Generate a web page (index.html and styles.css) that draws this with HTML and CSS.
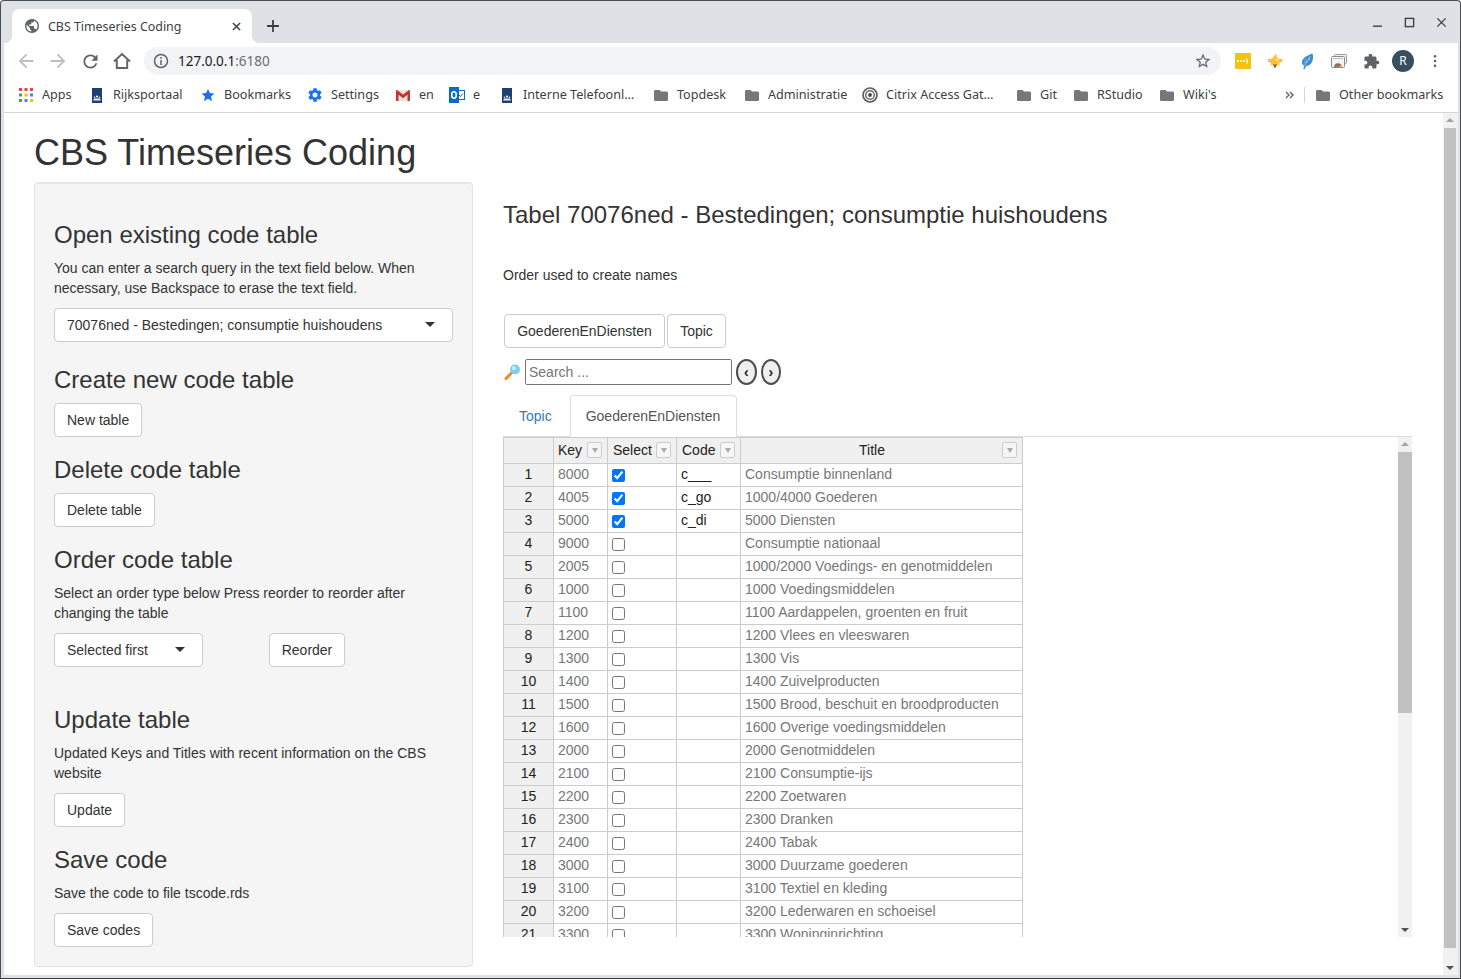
FILE: index.html
```html
<!DOCTYPE html>
<html lang="en">
<head>
<meta charset="utf-8">
<title>CBS Timeseries Coding</title>
<link rel="stylesheet" href="styles.css">
</head>
<body>
<svg class="defs" width="0" height="0" aria-hidden="true">
  <symbol id="folder" viewBox="2 4 20 16" preserveAspectRatio="none"><path d="M10 4H4c-1.100 0-2 .9-2 2v12c0 1.100.9 2 2 2h16c1.100 0 2-.9 2-2V8c0-1.100-.9-2-2-2h-8l-2-2z"/></symbol>
  <symbol id="rijk" viewBox="0 0 10 15"><rect width="10" height="15" fill="#1c3f75"/><circle cx="5" cy="8.500" r="1.100" fill="#fff"/><circle cx="2.500" cy="9.300" r=".9" fill="#cfd8e6"/><circle cx="7.500" cy="9.300" r=".9" fill="#cfd8e6"/><path d="M1.300 12.500c0-1.500 1-2 1-2h5.400s1 .5 1 2z" fill="#e6ebf3"/></symbol>
</svg>
<div class="window">
  <div class="tabstrip">
    <div class="tab">
      <svg class="tab-globe" viewBox="2 2 20 20"><path d="M12 2C6.480 2 2 6.480 2 12s4.480 10 10 10 10-4.480 10-10S17.520 2 12 2zm-1 17.930c-3.950-.49-7-3.850-7-7.930 0-.62.08-1.210.21-1.790L9 15v1c0 1.100.9 2 2 2v1.930zm6.900-2.540c-.26-.81-1-1.390-1.900-1.390h-1v-3c0-.55-.45-1-1-1H8v-2h2c.55 0 1-.45 1-1V7h2c1.100 0 2-.9 2-2v-.41c2.930 1.190 5 4.060 5 7.410 0 2.080-.8 3.970-2.100 5.390z"/></svg>
      <span class="tab-title">CBS Timeseries Coding</span>
      <svg class="tab-close" viewBox="0 0 10 10"><path d="M1 1l8 8M9 1l-8 8"/></svg>
    </div>
    <svg class="new-tab" viewBox="0 0 12 12"><path d="M6 0v12M0 6h12"/></svg>
    <div class="win-controls">
      <span class="win-btn"><svg viewBox="0 0 12 12"><path d="M1 10h10"/></svg></span>
      <span class="win-btn"><svg viewBox="0 0 12 12"><rect x="1.500" y="1.500" width="9" height="9"/></svg></span>
      <span class="win-btn"><svg viewBox="0 0 12 12"><path d="M1.500 1.500l9 9M10.500 1.500l-9 9"/></svg></span>
    </div>
  </div>

  <div class="toolbar">
    <span class="tool"><svg class="arrow-off" viewBox="0 0 24 24"><path d="M20 11H7.830l5.590-5.590L12 4l-8 8 8 8 1.410-1.410L7.830 13H20v-2z"/></svg></span>
    <span class="tool"><svg class="arrow-off" viewBox="0 0 24 24"><path d="M4 11h12.170l-5.590-5.590L12 4l8 8-8 8-1.410-1.410L16.170 13H4v-2z"/></svg></span>
    <span class="tool"><svg class="reload-icon" viewBox="0 0 24 24"><path d="M17.650 6.350C16.200 4.900 14.210 4 12 4c-4.420 0-7.990 3.580-7.990 8s3.570 8 7.990 8c3.730 0 6.840-2.550 7.730-6h-2.080c-.82 2.330-3.040 4-5.650 4-3.310 0-6-2.690-6-6s2.690-6 6-6c1.660 0 3.140.69 4.220 1.780L13 11h7V4l-2.350 2.350z"/></svg></span>
    <span class="tool"><svg class="home-icon" viewBox="0 0 18 18"><path d="M1 9.500L9 2l8 7.500M3.800 8v8h10.400V8"/></svg></span>
    <div class="omnibox">
      <svg class="info-icon" viewBox="0 0 16 16"><circle cx="8" cy="8" r="6.500"/><path d="M8 7v5M8 4v1.800"/></svg>
      <span class="url">127.0.0.1<span class="url-port">:6180</span></span>
      <svg class="star-icon" viewBox="0 0 24 24"><path d="M22 9.240l-7.190-.62L12 2 9.190 8.630 2 9.240l5.460 4.730L5.820 21 12 17.270 18.180 21l-1.630-7.030L22 9.240zM12 15.400l-3.760 2.270 1-4.280-3.320-2.880 4.380-.38L12 6.100l1.710 4.040 4.380.38-3.320 2.880 1 4.280L12 15.400z"/></svg>
    </div>
    <div class="extensions">
      <span class="tool"><svg class="ext" viewBox="0 0 16 16"><rect width="16" height="16" rx="1" fill="#f1c40f"/><circle cx="3" cy="8" r="1.100" fill="#fff"/><circle cx="6" cy="8" r="1.100" fill="#fff"/><circle cx="9" cy="8" r="1.100" fill="#fff"/><path d="M12 5.500v5" stroke="#fff" stroke-width="1.200"/></svg></span>
      <span class="tool"><svg class="ext-star" viewBox="0 0 18 16"><path d="M.5 8l5 1.500L9 15.500l3.500-6 5-1.500-5 .5-3.500 3-3.500-3z" fill="#a9611c"/><path d="M10 .8l1.500 4.400 6 1.300-4.500 3 .6 3L9 11l-4.400 1.500.8-3.500L.5 6.500l5.800-1z" fill="#fbc02d"/><path d="M9.500 2.500l1 3.500 3.500.8-2.800 1.900-1.700-.7z" fill="#ffdc66"/></svg></span>
      <span class="tool"><svg class="ext-feather" viewBox="0 0 13 17"><path d="M11.500 .5c1.200 3.500.5 7.500-1.500 10-1.300 1.700-3.200 2.500-5 2.400L3.500 16.500l-1.200-.5 1-3.300C1 11.500.2 9.300 1.500 7 3 4.200 7.500 1.800 11.500 .5z" fill="#3f8ad4"/><path d="M9.500 3L3.500 12.500M4 6l2 2M8 4.500l.5 3M3 9l3.500 .5" stroke="#a9d2f3" stroke-width=".8" fill="none"/></svg></span>
      <span class="tool"><svg class="ext" viewBox="0 0 16 16"><rect x="3.500" y="1.500" width="12" height="9" rx="1" fill="#f4f4f4" stroke="#9a9a9a"/><rect x=".5" y="3.500" width="13" height="11" rx="1" fill="#f4f4f4" stroke="#8c8c8c"/><path d="M2 5.500h10" stroke="#bbb"/><path d="M3.300 14a3.700 3.700 0 0 1 7.400 0z" fill="#ea4335"/><path d="M3.300 14a3.700 3.700 0 0 1 1.800-3.200l1.900 3.200z" fill="#34a853"/><path d="M7 14l3.700 0a3.700 3.700 0 0 0-.6-2z" fill="#fbbc05"/><circle cx="7" cy="13.300" r="1.300" fill="#4285f4"/></svg></span>
      <span class="tool"><svg class="puzzle-icon" viewBox="0 0 24 24"><path d="M20.500 11H19V7c0-1.100-.9-2-2-2h-4V3.500C13 2.120 11.880 1 10.500 1S8 2.120 8 3.500V5H4c-1.100 0-1.990.9-1.990 2v3.800H3.500c1.490 0 2.700 1.210 2.700 2.700s-1.210 2.700-2.700 2.700H2V20c0 1.100.9 2 2 2h3.800v-1.500c0-1.490 1.210-2.700 2.700-2.700 1.490 0 2.700 1.210 2.700 2.700V22H17c1.100 0 2-.9 2-2v-4h1.500c1.380 0 2.500-1.120 2.500-2.500S21.880 11 20.500 11z"/></svg></span>
      <span class="tool"><span class="avatar">R</span></span>
      <span class="tool"><svg class="dots" viewBox="0 0 4 16"><circle cx="2" cy="2.500" r="1.500"/><circle cx="2" cy="8" r="1.500"/><circle cx="2" cy="13.500" r="1.500"/></svg></span>
    </div>
  </div>

  <div class="bookmarks">
    <span class="bm"><svg class="bm-icon" viewBox="0 0 14 14"><rect width="3" height="3" fill="#ea4335"/><rect x="5.500" width="3" height="3" fill="#ea4335"/><rect x="11" width="3" height="3" fill="#ea4335"/><rect y="5.500" width="3" height="3" fill="#34a853"/><rect x="5.500" y="5.500" width="3" height="3" fill="#fbbc05"/><rect x="11" y="5.500" width="3" height="3" fill="#4285f4"/><rect y="11" width="3" height="3" fill="#34a853"/><rect x="5.500" y="11" width="3" height="3" fill="#4285f4"/><rect x="11" y="11" width="3" height="3" fill="#fbbc05"/></svg>Apps</span>
    <span class="bm"><svg class="bm-rijk"><use href="#rijk"/></svg>Rijksportaal</span>
    <span class="bm"><svg class="bm-icon" viewBox="0 0 24 24"><path fill="#1a73e8" d="M12 1.500l3.300 7.200 7.700.8-5.800 5.200 1.700 7.800L12 18.500l-6.900 4 1.700-7.800L1 9.500l7.700-.8z"/></svg>Bookmarks</span>
    <span class="bm"><svg class="bm-icon" viewBox="2 2 20 20"><path fill="#1a73e8" d="M19.140 12.940c.04-.3.06-.61.06-.94 0-.32-.02-.64-.07-.94l2.030-1.580c.18-.14.23-.41.12-.61l-1.920-3.320c-.12-.22-.37-.29-.59-.22l-2.390.96c-.5-.38-1.030-.7-1.620-.94l-.36-2.540c-.04-.24-.24-.41-.48-.41h-3.840c-.24 0-.43.17-.47.41l-.36 2.540c-.59.24-1.130.57-1.620.94l-2.390-.96c-.22-.08-.47 0-.59.22L2.740 8.870c-.12.21-.08.47.12.61l2.030 1.580c-.05.3-.09.63-.09.94s.02.64.07.94l-2.030 1.580c-.18.14-.23.41-.12.61l1.920 3.320c.12.22.37.29.59.22l2.390-.96c.5.38 1.030.7 1.620.94l.36 2.540c.05.24.24.41.48.41h3.840c.24 0 .44-.17.47-.41l.36-2.540c.59-.24 1.130-.56 1.620-.94l2.390.96c.22.08.47 0 .59-.22l1.920-3.320c.12-.22.07-.47-.12-.61l-2.010-1.580zM12 15.600c-1.980 0-3.600-1.620-3.600-3.600s1.620-3.600 3.600-3.600 3.600 1.620 3.600 3.600-1.620 3.600-3.600 3.600z"/></svg>Settings</span>
    <span class="bm"><svg class="bm-gmail" viewBox="0 0 14 11"><path fill="#e4e4e4" d="M0 0h14v11H0z"/><path fill="#c5372c" d="M0 1C0 .3.7-.2 1.300.2L7 4.500 12.700.2C13.300-.2 14 .3 14 1v10h-2.500V4.800L7 8.200 2.500 4.800V11H0z"/></svg>en</span>
    <span class="bm"><svg class="bm-outlook" viewBox="0 0 16 16"><rect x="8" y="3.500" width="7.500" height="9" fill="#fff" stroke="#0a6cc4"/><path d="M10 8l1.500 1.500 2.500-3" stroke="#0a6cc4" fill="none"/><rect y="0" width="10" height="16" fill="#0a6cc4"/><ellipse cx="5" cy="8" rx="2.300" ry="3.200" fill="none" stroke="#fff" stroke-width="1.600"/></svg>e</span>
    <span class="bm"><svg class="bm-rijk"><use href="#rijk"/></svg>Interne Telefoonl…</span>
    <span class="bm"><svg class="bm-folder"><use href="#folder"/></svg>Topdesk</span>
    <span class="bm"><svg class="bm-folder"><use href="#folder"/></svg>Administratie</span>
    <span class="bm"><svg class="bm-citrix" viewBox="0 0 16 16"><circle cx="8" cy="8" r="7" fill="none" stroke="#5c5c5c" stroke-width="1.700"/><circle cx="8" cy="8" r="4.300" fill="none" stroke="#6a6a6a" stroke-width="1.500"/><circle cx="8" cy="8" r="1.900" fill="#444"/></svg>Citrix Access Gat…</span>
    <span class="bm"><svg class="bm-folder"><use href="#folder"/></svg>Git</span>
    <span class="bm"><svg class="bm-folder"><use href="#folder"/></svg>RStudio</span>
    <span class="bm"><svg class="bm-folder"><use href="#folder"/></svg>Wiki's</span>
    <span class="bm-more"><svg viewBox="0 0 9 8"><path d="M1 1l3 3-3 3M5 1l3 3-3 3"/></svg></span>
    <span class="bm-sep"></span>
    <span class="bm"><svg class="bm-folder"><use href="#folder"/></svg>Other bookmarks</span>
  </div>

  <div class="viewport">
    <div class="page">
      <h1 class="page-title">CBS Timeseries Coding</h1>
      <div class="columns">
        <aside class="well">
          <h3 class="heading">Open existing code table</h3>
          <p class="copy">You can enter a search query in the text field below. When necessary, use Backspace to erase the text field.</p>
          <div class="dropdown dropdown-wide">70076ned - Bestedingen; consumptie huishoudens<span class="caret"></span></div>

          <h3 class="heading heading-after-field">Create new code table</h3>
          <button class="btn" type="button">New table</button>

          <h3 class="heading">Delete code table</h3>
          <button class="btn" type="button">Delete table</button>

          <h3 class="heading">Order code table</h3>
          <p class="copy">Select an order type below Press reorder to reorder after changing the table</p>
          <div class="order-row">
            <div class="dropdown dropdown-order">Selected first<span class="caret"></span></div>
            <button class="btn btn-reorder" type="button">Reorder</button>
          </div>

          <h3 class="heading heading-after-order">Update table</h3>
          <p class="copy">Updated Keys and Titles with recent information on the CBS website</p>
          <button class="btn" type="button">Update</button>

          <h3 class="heading">Save code</h3>
          <p class="copy">Save the code to file tscode.rds</p>
          <button class="btn" type="button">Save codes</button>
        </aside>

        <main class="main">
          <h3 class="heading">Tabel 70076ned - Bestedingen; consumptie huishoudens</h3>
          <p class="order-note">Order used to create names</p>
          <div class="order-buttons">
            <button class="btn btn-goods" type="button">GoederenEnDiensten</button>
            <button class="btn btn-topic" type="button">Topic</button>
          </div>
          <div class="search-row">
            <svg class="search-icon" viewBox="0 0 16 16"><path d="M7 9L1.500 14.500" stroke="#f08a1d" stroke-width="3" stroke-linecap="round"/><circle cx="10.500" cy="5.500" r="5" fill="#7fcdf5"/><circle cx="9.300" cy="4.300" r="2" fill="#c9ecfc"/></svg>
            <input class="search-input" type="text" placeholder="Search ...">
            <button class="round-btn" type="button">‹</button>
            <button class="round-btn" type="button">›</button>
          </div>
          <nav class="tabs">
            <a class="tab-link">Topic</a>
            <a class="tab-link tab-active">GoederenEnDiensten</a>
          </nav>
          <div class="table-area">
            <div class="table-clip">
              <table class="grid">
                <colgroup><col class="c-idx"><col class="c-key"><col class="c-sel"><col class="c-code"><col class="c-title"></colgroup>
                <thead>
                  <tr>
                    <th></th>
                    <th><div class="th-in"><span class="th-label">Key</span><span class="filter"></span></div></th>
                    <th><div class="th-in"><span class="th-label">Select</span><span class="filter"></span></div></th>
                    <th><div class="th-in"><span class="th-label">Code</span><span class="filter"></span></div></th>
                    <th><div class="th-in"><span class="th-label th-center">Title</span><span class="filter"></span></div></th>
                  </tr>
                </thead>
                <tbody>
                  <tr><th>1</th><td class="ro">8000</td><td><input class="chk" type="checkbox" checked></td><td>c___</td><td class="ro">Consumptie binnenland</td></tr>
                  <tr><th>2</th><td class="ro">4005</td><td><input class="chk" type="checkbox" checked></td><td>c_go</td><td class="ro">1000/4000 Goederen</td></tr>
                  <tr><th>3</th><td class="ro">5000</td><td><input class="chk" type="checkbox" checked></td><td>c_di</td><td class="ro">5000 Diensten</td></tr>
                  <tr><th>4</th><td class="ro">9000</td><td><input class="chk" type="checkbox"></td><td></td><td class="ro">Consumptie nationaal</td></tr>
                  <tr><th>5</th><td class="ro">2005</td><td><input class="chk" type="checkbox"></td><td></td><td class="ro">1000/2000 Voedings- en genotmiddelen</td></tr>
                  <tr><th>6</th><td class="ro">1000</td><td><input class="chk" type="checkbox"></td><td></td><td class="ro">1000 Voedingsmiddelen</td></tr>
                  <tr><th>7</th><td class="ro">1100</td><td><input class="chk" type="checkbox"></td><td></td><td class="ro">1100 Aardappelen, groenten en fruit</td></tr>
                  <tr><th>8</th><td class="ro">1200</td><td><input class="chk" type="checkbox"></td><td></td><td class="ro">1200 Vlees en vleeswaren</td></tr>
                  <tr><th>9</th><td class="ro">1300</td><td><input class="chk" type="checkbox"></td><td></td><td class="ro">1300 Vis</td></tr>
                  <tr><th>10</th><td class="ro">1400</td><td><input class="chk" type="checkbox"></td><td></td><td class="ro">1400 Zuivelproducten</td></tr>
                  <tr><th>11</th><td class="ro">1500</td><td><input class="chk" type="checkbox"></td><td></td><td class="ro">1500 Brood, beschuit en broodproducten</td></tr>
                  <tr><th>12</th><td class="ro">1600</td><td><input class="chk" type="checkbox"></td><td></td><td class="ro">1600 Overige voedingsmiddelen</td></tr>
                  <tr><th>13</th><td class="ro">2000</td><td><input class="chk" type="checkbox"></td><td></td><td class="ro">2000 Genotmiddelen</td></tr>
                  <tr><th>14</th><td class="ro">2100</td><td><input class="chk" type="checkbox"></td><td></td><td class="ro">2100 Consumptie-ijs</td></tr>
                  <tr><th>15</th><td class="ro">2200</td><td><input class="chk" type="checkbox"></td><td></td><td class="ro">2200 Zoetwaren</td></tr>
                  <tr><th>16</th><td class="ro">2300</td><td><input class="chk" type="checkbox"></td><td></td><td class="ro">2300 Dranken</td></tr>
                  <tr><th>17</th><td class="ro">2400</td><td><input class="chk" type="checkbox"></td><td></td><td class="ro">2400 Tabak</td></tr>
                  <tr><th>18</th><td class="ro">3000</td><td><input class="chk" type="checkbox"></td><td></td><td class="ro">3000 Duurzame goederen</td></tr>
                  <tr><th>19</th><td class="ro">3100</td><td><input class="chk" type="checkbox"></td><td></td><td class="ro">3100 Textiel en kleding</td></tr>
                  <tr><th>20</th><td class="ro">3200</td><td><input class="chk" type="checkbox"></td><td></td><td class="ro">3200 Lederwaren en schoeisel</td></tr>
                  <tr><th>21</th><td class="ro">3300</td><td><input class="chk" type="checkbox"></td><td></td><td class="ro">3300 Woninginrichting</td></tr>
                </tbody>
              </table>
            </div>
            <div class="scrollbar scrollbar-inner">
              <span class="sb-up"></span>
              <span class="sb-thumb"></span>
              <span class="sb-down"></span>
            </div>
          </div>
        </main>
      </div>
    </div>
    <div class="scrollbar scrollbar-page">
      <span class="sb-up"></span>
      <span class="sb-thumb"></span>
      <span class="sb-down"></span>
    </div>
  </div>
</div>
</body>
</html>
```

FILE: styles.css
```css
* { box-sizing: border-box; }
html, body { margin: 0; height: 100%; overflow: hidden; }
body { font-family: "Liberation Sans", Arial, sans-serif; font-size: 14px; line-height: 20px; color: #333; background: #fff; }
.defs { position: absolute; }

/* Browser frame */
.window { height: 979px; display: flex; flex-direction: column; background: #dee1e6; border: 1px solid #4b4d50; border-bottom-color: #3a3b3d; padding: 0 2px 3px 3px; border-radius: 4px 4px 0 0; font-family: "Noto Sans", sans-serif; }
.tabstrip { height: 42px; flex: none; display: flex; align-items: flex-start; }
.tab { position: relative; margin: 8px 0 0 8px; width: 240px; height: 34px; background: #fff; border-radius: 8px 8px 0 0; display: flex; align-items: center; padding: 0 11px 0 13px; }
.tab::before, .tab::after { content: ""; position: absolute; bottom: 0; width: 8px; height: 8px; }
.tab::before { left: -8px; background: radial-gradient(circle at 0 0, transparent 8px, #fff 8.500px); }
.tab::after { right: -8px; background: radial-gradient(circle at 100% 0, transparent 8px, #fff 8.500px); }
.tab-globe { width: 14px; height: 14px; fill: #5f6368; flex: none; }
.tab-title { margin-left: 9px; padding-top: 2px; font-size: 12.400px; color: #3c4043; flex: 1; white-space: nowrap; }
.tab-close { width: 9px; height: 9px; stroke: #3c4043; stroke-width: 1.600; fill: none; flex: none; }
.new-tab { width: 12px; height: 12px; margin: 19px 0 0 15px; stroke: #3c4043; stroke-width: 1.800; fill: none; flex: none; }
.win-controls { margin-left: auto; display: flex; padding-right: 1px; }
.win-btn { width: 32px; height: 42px; display: flex; align-items: center; justify-content: center; }
.win-btn svg { width: 11px; height: 11px; stroke: #3c4043; stroke-width: 1.500; fill: none; }

.toolbar { height: 37px; flex: none; background: #fff; display: flex; align-items: center; padding: 0 7px 1px 6px; }
.tool { width: 32px; height: 32px; flex: none; display: flex; align-items: center; justify-content: center; }
.arrow-off { width: 22px; height: 22px; fill: #bcbec1; }
.reload-icon { width: 21px; height: 21px; fill: #5f6368; }
.puzzle-icon { width: 17px; height: 17px; fill: #5f6368; }
.home-icon { width: 18px; height: 18px; fill: none; stroke: #5f6368; stroke-width: 1.900; }
.omnibox { flex: 1; height: 28px; margin-left: 6px; border-radius: 14px; background: #f1f3f4; display: flex; align-items: center; padding: 0 9px 0 9px; }
.info-icon { width: 16px; height: 16px; fill: none; stroke: #5f6368; stroke-width: 1.500; flex: none; }
.url { margin-left: 9px; font-size: 13.500px; color: #202124; flex: 1; }
.url-port { color: #6a6e73; }
.star-icon { width: 18px; height: 18px; fill: #5f6368; flex: none; }
.extensions { display: flex; margin-left: 6px; }
.ext { width: 16px; height: 16px; }
.ext-star { width: 18px; height: 16px; }
.ext-feather { width: 13px; height: 17px; }
.avatar { width: 22px; height: 22px; border-radius: 50%; background: #37505f; color: #fff; font-size: 12px; display: flex; align-items: center; justify-content: center; }
.dots { width: 4px; height: 14px; fill: #5f6368; }

.bookmarks { height: 33px; flex: none; background: #fff; border-bottom: 1px solid #d3d5d9; padding: 0 0 2px 15px; display: grid; grid-template-columns: 73px 109px 107px 88px 53px 53px 152px 91px 117px 155px 57px 86px 125px 19px 12px auto; align-items: center; font-size: 12.600px; color: #3c4043; white-space: nowrap; }
.bm { display: flex; align-items: center; }
.bm-icon { width: 14px; height: 14px; margin-right: 9px; flex: none; }
.bm-gmail { width: 14px; height: 11px; margin-right: 9px; flex: none; }
.bm-folder { width: 14px; height: 11px; margin-right: 9px; flex: none; fill: #75787b; }
.bm-rijk { width: 10px; height: 15px; margin-right: 11px; flex: none; }
.bm-outlook { width: 16px; height: 16px; margin-right: 8px; flex: none; }
.bm-citrix { width: 16px; height: 16px; margin-right: 8px; flex: none; }
.bm-more svg { width: 9px; height: 8px; fill: none; stroke: #5f6368; stroke-width: 1.400; display: block; }
.bm-sep { width: 1px; height: 16px; background: #d3d5d9; }

/* Page */
.viewport { flex: 1; min-height: 0; background: #fff; display: flex; overflow: hidden; font-family: "Liberation Sans", Arial, sans-serif; }
.page { flex: 1; min-width: 0; padding: 0 31px 0 30px; }
.page-title { margin: 20px 0 9px; font-size: 36px; line-height: 40px; font-weight: 500; color: #333; }
.columns { display: flex; gap: 30px; align-items: flex-start; }
.well { width: 439px; flex: none; background: #f5f5f5; border: 1px solid #e3e3e3; border-radius: 4px; padding: 19px; box-shadow: inset 0 1px 1px rgba(0,0,0,.05); }
.heading { margin: 20px 0 10px; font-size: 24px; line-height: 26px; font-weight: 500; color: #333; }
.heading-after-field { margin-top: 25px; }
.heading-after-order { margin-top: 40px; }
.copy { margin: 0 0 10px; }
.btn { display: block; height: 34px; padding: 6px 12px; font: inherit; font-size: 14px; line-height: 20px; color: #333; background: #fff; border: 1px solid #ccc; border-radius: 4px; }
.btn-reorder { width: 76px; padding: 6px 0; }
.btn-goods { width: 161px; padding: 6px 0; }
.btn-topic { width: 59px; padding: 6px 0; }
.dropdown { position: relative; height: 34px; padding: 6px 12px; background: #fff; border: 1px solid #ccc; border-radius: 4px; color: #333; }
.dropdown-wide { width: 399px; }
.dropdown-order { width: 149px; }
.caret { position: absolute; top: 13px; right: 17px; border-style: solid; border-width: 5px 5px 0; border-color: #333 transparent transparent; }
.order-row { display: flex; gap: 66px; }

.main { flex: 1; min-width: 0; }
.order-note { margin: 37px 0 0; }
.order-buttons { display: flex; gap: 2px; margin: 29px 0 0 1px; }
.search-row { display: flex; align-items: center; margin-top: 11px; height: 26px; }
.search-icon { width: 17px; height: 16px; margin-left: 1px; flex: none; }
.search-input { width: 207px; height: 26px; margin-left: 4px; padding: 1px 3px; font: inherit; font-size: 14px; border: 1px solid #767676; border-radius: 2px; color: #333; background: #fff; }
.search-input::placeholder { color: #757575; opacity: 1; }
.round-btn { width: 20.500px; height: 26px; margin-left: 4px; padding: 0; border: 2px solid #4d4d4d; border-radius: 50%; background: #efefef; font: inherit; font-size: 14px; font-weight: 700; line-height: 18px; color: #222; }
.tabs { display: flex; gap: 2px; margin-top: 10px; height: 42px; border-bottom: 1px solid #ddd; }
.tab-link { height: 42px; padding: 10px 15px; border: 1px solid transparent; border-radius: 4px 4px 0 0; color: #337ab7; }
.tab-active { width: 167px; color: #555; background: #fff; border-color: #ddd #ddd #fff; }
.table-area { display: flex; height: 500px; }
.table-clip { flex: 1; min-width: 0; overflow: hidden; }
.grid { table-layout: fixed; width: 520px; border-collapse: separate; border-spacing: 0; color: #222; }
.c-idx { width: 51px; }
.c-key { width: 54px; }
.c-sel { width: 69px; }
.c-code { width: 64px; }
.c-title { width: 282px; }
.grid th, .grid td { height: 23px; padding: 0 4px; border-right: 1px solid #ccc; border-bottom: 1px solid #ccc; font-weight: 400; line-height: 20px; text-align: left; vertical-align: top; white-space: nowrap; overflow: hidden; }
.grid tbody th:first-child { border-left: 1px solid #ccc; background: #f0f0f0; text-align: center; }
.grid thead th { height: 27px; background: #f0f0f0; border-top: 1px solid #ccc; padding: 0 5px 2px; vertical-align: middle; }
.grid thead th:first-child { border-left: 1px solid #ccc; }
.grid thead th:nth-child(2) { padding-left: 4px; }
.th-in { display: flex; align-items: center; }
.th-label { flex: none; }
.th-center { flex: 1; padding-right: 4px; text-align: center; }
.filter { position: relative; width: 15px; height: 16px; margin-left: auto; background: #f5f5f5; border: 1px solid #ccc; border-radius: 2px; flex: none; }
.filter::after { content: ""; position: absolute; left: 3.500px; top: 5px; border-style: solid; border-width: 5px 3px 0; border-color: #aaa transparent transparent; }
.ro { color: #777; }
.chk { display: block; margin: 5px 0 0; width: 13px; height: 13px; }

/* Drawn scrollbars */
.scrollbar { width: 14px; flex: none; background: #f1f1f1; display: flex; flex-direction: column; align-items: center; position: relative; }
.sb-up, .sb-down { position: absolute; border-style: solid; border-color: transparent; }
.sb-up { top: 5px; border-width: 0 4px 4px; border-bottom-color: #a3a3a3; }
.sb-down { bottom: 5px; border-width: 4px 4px 0; border-top-color: #505050; }
.sb-thumb { display: block; background: #c1c1c1; width: 100%; }
.scrollbar-inner .sb-thumb { margin-top: 15px; height: 261px; padding: 0; }
.scrollbar-page { width: 15px; padding: 0 2px 0 1px; }
.scrollbar-page .sb-thumb { margin-top: 15px; height: 820px; }
```
